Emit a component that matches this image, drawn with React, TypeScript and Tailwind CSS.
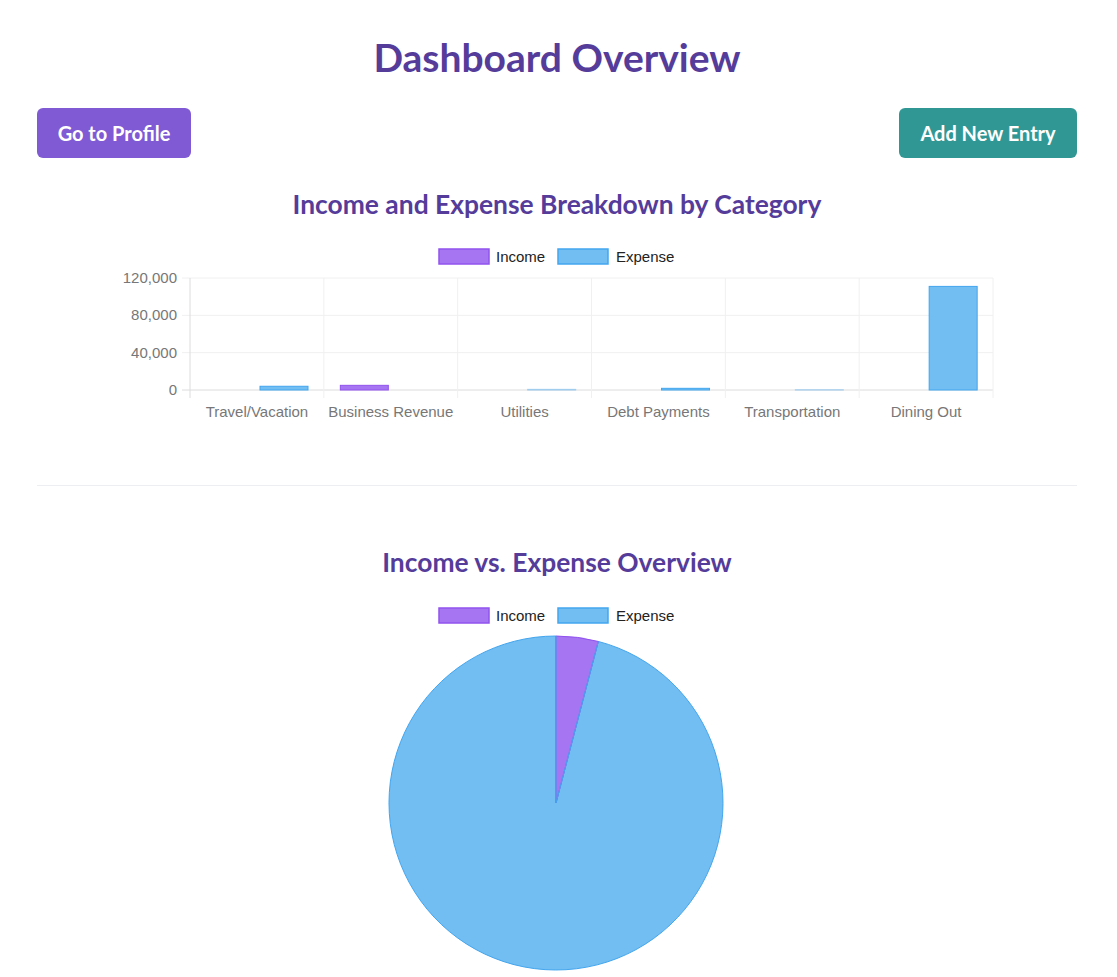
import React from "react";

const cats = ["Travel/Vacation", "Business Revenue", "Utilities", "Debt Payments", "Transportation", "Dining Out"];
const income = [0, 5000, 0, 0, 0, 0];
const expense = [4000, 0, 700, 1800, 200, 111000];

const INC_FILL = "#a675f1";
const INC_BORDER = "#9153ee";
const EXP_FILL = "#72bdf2";
const EXP_BORDER = "#43a6ee";

function Legend({ y, cx }: { y: number; cx: number }) {
  const x0 = cx - 118;
  return (
    <g fontFamily="'Liberation Sans', Arial, sans-serif" fontSize="15" fill="#222">
      <rect x={x0} y={y} width={50} height={15} fill={INC_FILL} stroke={INC_BORDER} strokeWidth={1.5} />
      <text x={x0 + 57} y={y + 13}>Income</text>
      <rect x={x0 + 119} y={y} width={50} height={15} fill={EXP_FILL} stroke={EXP_BORDER} strokeWidth={1.5} />
      <text x={x0 + 177} y={y + 13}>Expense</text>
    </g>
  );
}

function BarChart() {
  const left = 153;
  const right = 956;
  const top = 58;
  const bottom = 170;
  const cw = (right - left) / 6;
  const scale = (bottom - top) / 120000;
  const ticks = [0, 40000, 80000, 120000];
  return (
    <svg width={1040} height={230} className="block">
      <Legend y={29} cx={520} />
      {ticks.map((t) => {
        const y = bottom - t * scale;
        return (
          <g key={t}>
            <line x1={left - 8} x2={right} y1={y} y2={y} stroke={t === 0 ? "#dcdcdc" : "#f0f0f0"} strokeWidth={1} />
            <text x={140} y={y + 5} textAnchor="end" fontFamily="'Liberation Sans', Arial, sans-serif" fontSize="15" fill="#777">
              {t.toLocaleString("en-US")}
            </text>
          </g>
        );
      })}
      {Array.from({ length: 7 }).map((_, i) => {
        const x = left + i * cw;
        return <line key={i} x1={x} x2={x} y1={top} y2={bottom + 8} stroke={i === 0 ? "#dcdcdc" : "#f0f0f0"} strokeWidth={1} />;
      })}
      {cats.map((c, i) => {
        const l = left + i * cw;
        const ih = income[i] * scale;
        const eh = expense[i] * scale;
        return (
          <g key={c}>
            {ih > 0 && (
              <rect x={l + 16.5} y={bottom - ih} width={48} height={ih} fill={INC_FILL} stroke={INC_BORDER} strokeWidth={1} />
            )}
            {eh > 0 && (
              <rect
                x={l + 70}
                y={bottom - eh}
                width={48}
                height={eh}
                fill={EXP_FILL}
                stroke={EXP_BORDER}
                strokeWidth={1}
                opacity={eh < 1.5 ? 0.45 : 1}
              />
            )}
            <text x={l + cw / 2} y={197} textAnchor="middle" fontFamily="'Liberation Sans', Arial, sans-serif" fontSize="15" fill="#777">
              {c}
            </text>
          </g>
        );
      })}
    </svg>
  );
}

function PieChart() {
  const cx = 519;
  const cy = 225;
  const r = 167;
  const totalInc = income.reduce((a, b) => a + b, 0);
  const totalExp = expense.reduce((a, b) => a + b, 0);
  const f = totalInc / (totalInc + totalExp);
  const a = f * Math.PI * 2;
  const ex = cx + r * Math.sin(a);
  const ey = cy - r * Math.cos(a);
  return (
    <svg width={1040} height={400} className="block">
      <Legend y={30} cx={520} />
      <path d={`M ${cx} ${cy} L ${ex} ${ey} A ${r} ${r} 0 1 1 ${cx} ${cy - r} Z`} fill={EXP_FILL} stroke={EXP_BORDER} strokeWidth={1} />
      <path d={`M ${cx} ${cy} L ${cx} ${cy - r} A ${r} ${r} 0 0 1 ${ex} ${ey} Z`} fill={INC_FILL} stroke={INC_BORDER} strokeWidth={1} />
      <line x1={cx} y1={cy} x2={ex} y2={ey} stroke={EXP_BORDER} strokeWidth={1} />
      <line x1={cx} y1={cy} x2={cx} y2={cy - r} stroke={EXP_BORDER} strokeWidth={1} />
    </svg>
  );
}

export default function App() {
  return (
    <div className="min-h-screen bg-white pl-[37px] pr-[40px] overflow-hidden" style={{ fontFamily: "Lato, 'Noto Sans', sans-serif" }}>
      <h1 className="pt-[37px] text-center text-[39px] leading-[40px] font-bold text-[#553c9a]">Dashboard Overview</h1>
      <div className="mt-[31px] flex justify-between">
        <button className="h-[50px] w-[154px] rounded-md bg-[#805ad5] text-[20px] font-bold text-white">Go to Profile</button>
        <button className="h-[50px] w-[178px] rounded-md bg-[#319795] text-[20px] font-bold text-white">Add New Entry</button>
      </div>
      <h2 className="mt-[30px] text-center text-[26.4px] leading-[32px] font-bold text-[#553c9a]">Income and Expense Breakdown by Category</h2>
      <BarChart />
      <div className="mt-[35px] border-t border-[#eceef2]" />
      <h2 className="mt-[60px] text-center text-[26.4px] leading-[32px] font-bold text-[#553c9a]">Income vs. Expense Overview</h2>
      <PieChart />
    </div>
  );
}
